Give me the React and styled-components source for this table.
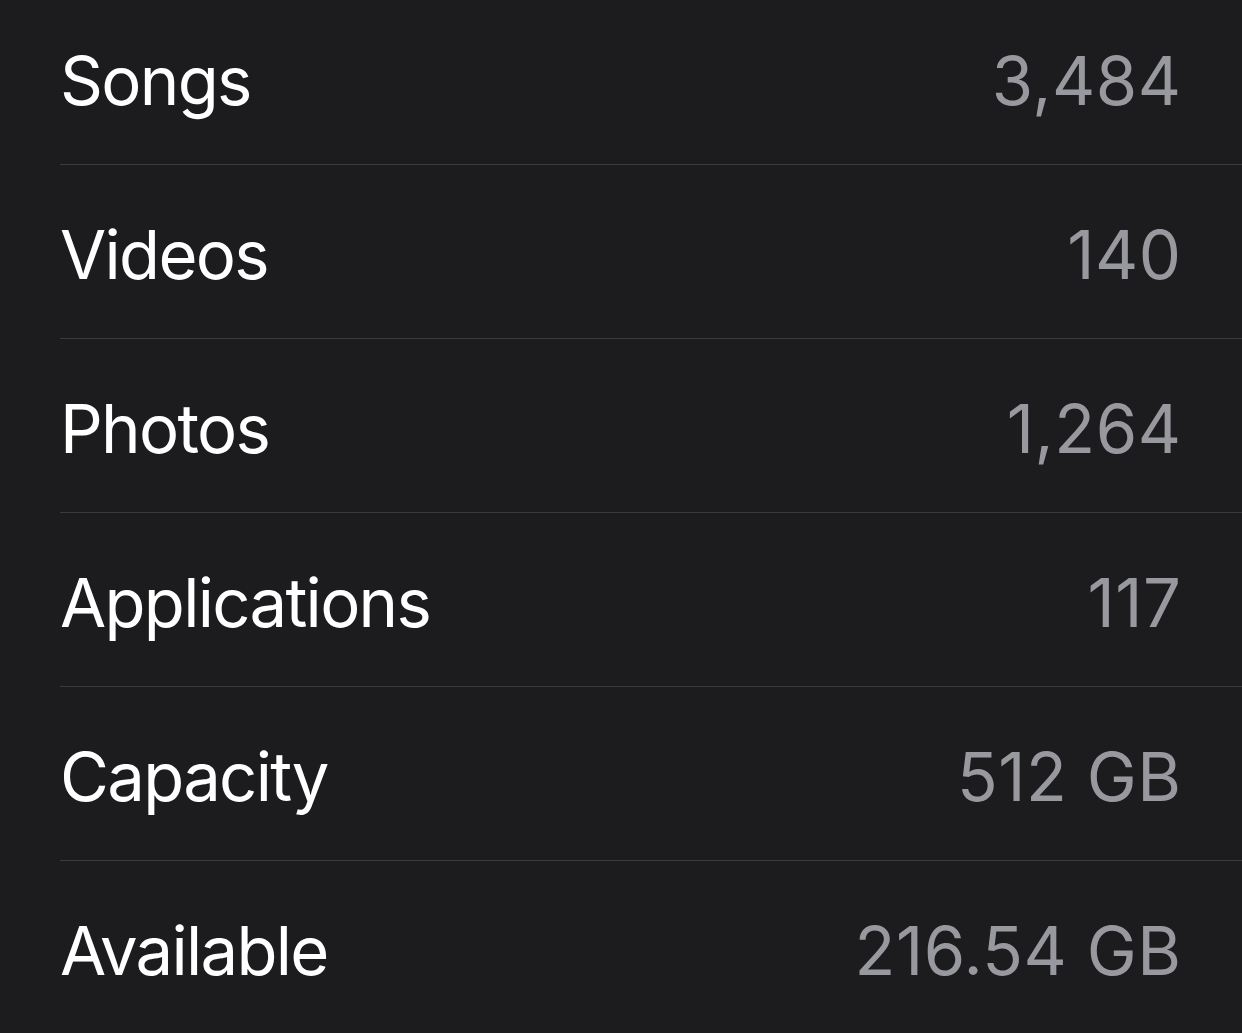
import React from "react"
import styled, { createGlobalStyle } from "styled-components"

const GlobalStyle = createGlobalStyle`
  html, body {
    margin: 0;
    padding: 0;
    background: #1c1c1e;
    overflow: hidden;
  }
  body {
    font-family: Inter, "Noto Sans", "Liberation Sans", sans-serif;
    -webkit-font-smoothing: antialiased;
  }
`

const Screen = styled.div`
  width: 1242px;
  height: 1033px;
  background: #1c1c1e;
  overflow: hidden;
`

const List = styled.ul`
  list-style: none;
  margin: -9px 0 0 0;
  padding: 0 0 0 60px;
`

const Row = styled.li`
  display: flex;
  align-items: center;
  justify-content: space-between;
  height: 174px;
  padding: 6px 61px 0 0;
  box-sizing: border-box;
  border-bottom: 1px solid ${p => (p.$last ? "transparent" : "#3a3a3d")};
`

const Label = styled.span`
  font-size: 67px;
  color: #ffffff;
  letter-spacing: -1.7px;
`

const Value = styled.span`
  font-size: 67px;
  color: #98989f;
  letter-spacing: 0.5px;
  margin-right: -0.5px;
`

const rows = [
  { label: "Songs", value: "3,484" },
  { label: "Videos", value: "140" },
  { label: "Photos", value: "1,264" },
  { label: "Applications", value: "117" },
  { label: "Capacity", value: "512 GB" },
  { label: "Available", value: "216.54 GB" },
]

export default function App() {
  return (
    <Screen>
      <GlobalStyle />
      <List>
        {rows.map((r, i) => (
          <Row key={r.label} $last={i === rows.length - 1}>
            <Label>{r.label}</Label>
            <Value>{r.value}</Value>
          </Row>
        ))}
      </List>
    </Screen>
  )
}
